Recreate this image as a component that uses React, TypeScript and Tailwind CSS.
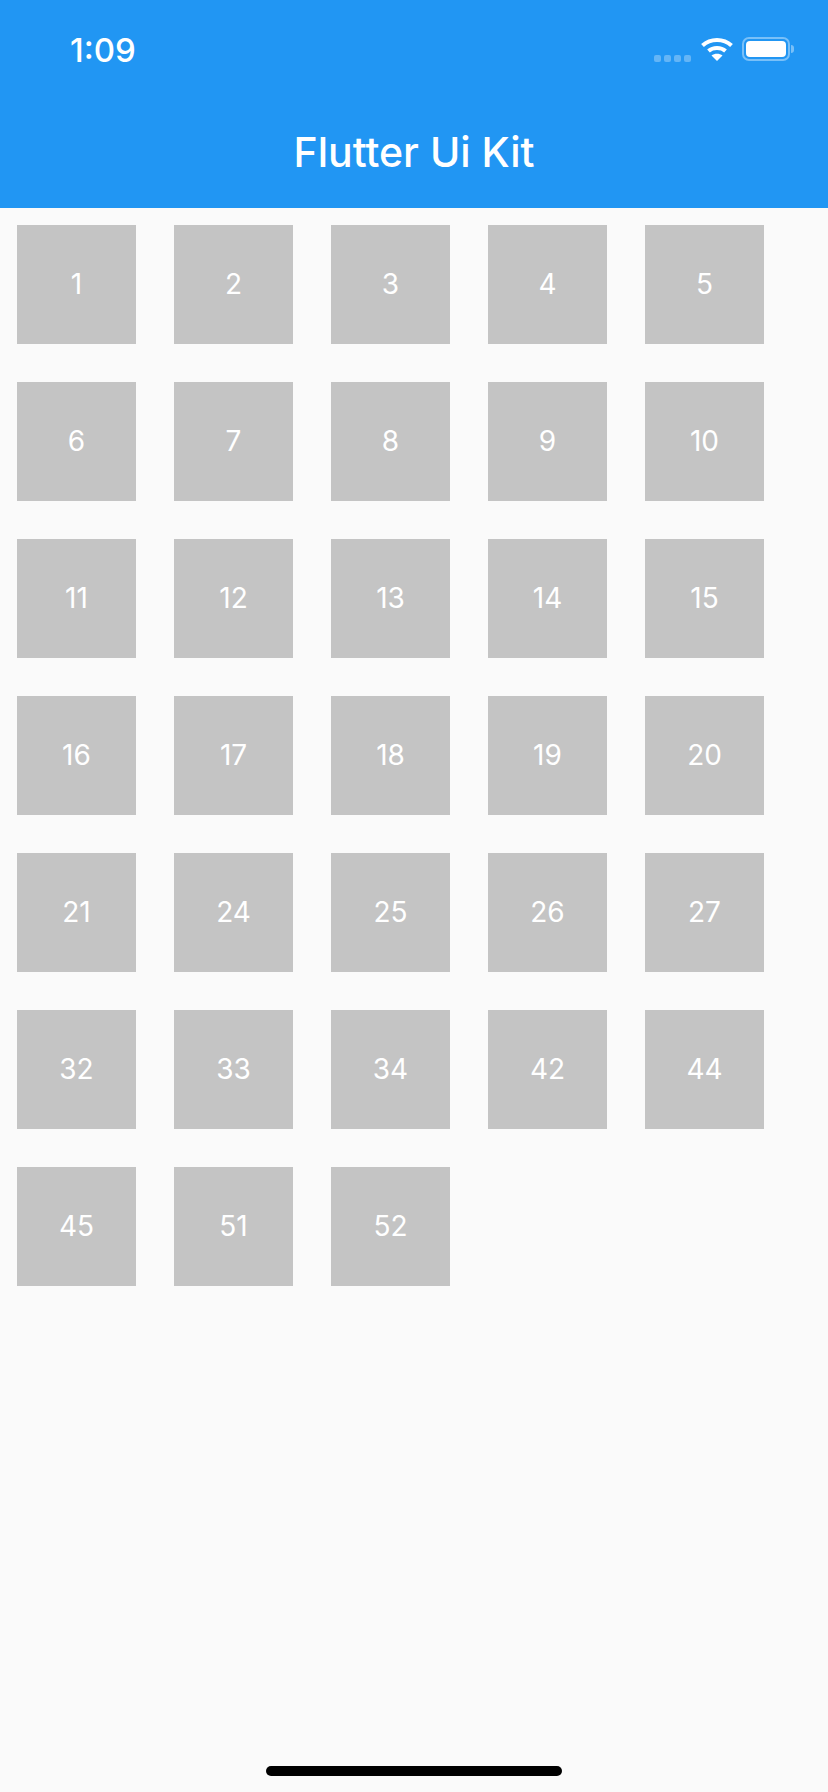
const labels = [1,2,3,4,5,6,7,8,9,10,11,12,13,14,15,16,17,18,19,20,21,24,25,26,27,32,33,34,42,44,45,51,52];

export default function App() {
  return (
    <div className="relative flex h-[1792px] w-[828px] flex-col overflow-hidden bg-[#fafafa] font-['Inter',sans-serif]">
      <header className="relative h-[208px] shrink-0 bg-[#2196f3] text-white">
        <div className="flex h-[100px] items-start justify-between">
          <span className="ml-[70px] mt-[30px] text-[33px] font-medium leading-[40px]">1:09</span>
          <div className="mr-[34px] mt-[37px] flex items-start">
            <div className="mt-[18px] flex gap-[3px]">
              <i className="h-[7px] w-[7px] rounded-[2px] bg-white/30" />
              <i className="h-[7px] w-[7px] rounded-[2px] bg-white/30" />
              <i className="h-[7px] w-[7px] rounded-[2px] bg-white/30" />
              <i className="h-[7px] w-[7px] rounded-[2px] bg-white/30" />
            </div>
            <svg className="ml-[10px] mt-[0px]" width="32" height="24" viewBox="0 0 32 24" fill="none">
              <path d="M1.5 8.5C9.5 1 22.5 1 30.5 8.5" stroke="white" strokeWidth="4" />
              <path d="M7.5 14C12 10 20 10 24.5 14" stroke="white" strokeWidth="4" />
              <path d="M16 24L10.5 18.5C13.5 16 18.5 16 21.5 18.5Z" fill="white" />
            </svg>
            <div className="ml-[9px] flex h-[24px] w-[48px] items-center rounded-[7px] border-2 border-white/40 p-[2px]">
              <div className="h-full w-full rounded-[4px] bg-white" />
            </div>
            <div className="ml-[1px] mt-[8px] h-[8px] w-[3px] rounded-r-[3px] bg-white/40" />
          </div>
        </div>
        <h1 className="mt-[28px] text-center text-[41px] font-medium leading-[48px]">Flutter Ui Kit</h1>
      </header>
      <main className="flex flex-wrap gap-[38px] pl-[17px] pr-[30px] pt-[17px]">
        {labels.map((n) => (
          <div key={n} className="flex h-[119px] w-[119px] items-center justify-center bg-[#c4c4c4] pb-[2px] text-[28px] text-white">
            {n}
          </div>
        ))}
      </main>
      <div className="absolute left-[266px] top-[1766px] h-[10px] w-[296px] rounded-full bg-black" />
    </div>
  );
}
